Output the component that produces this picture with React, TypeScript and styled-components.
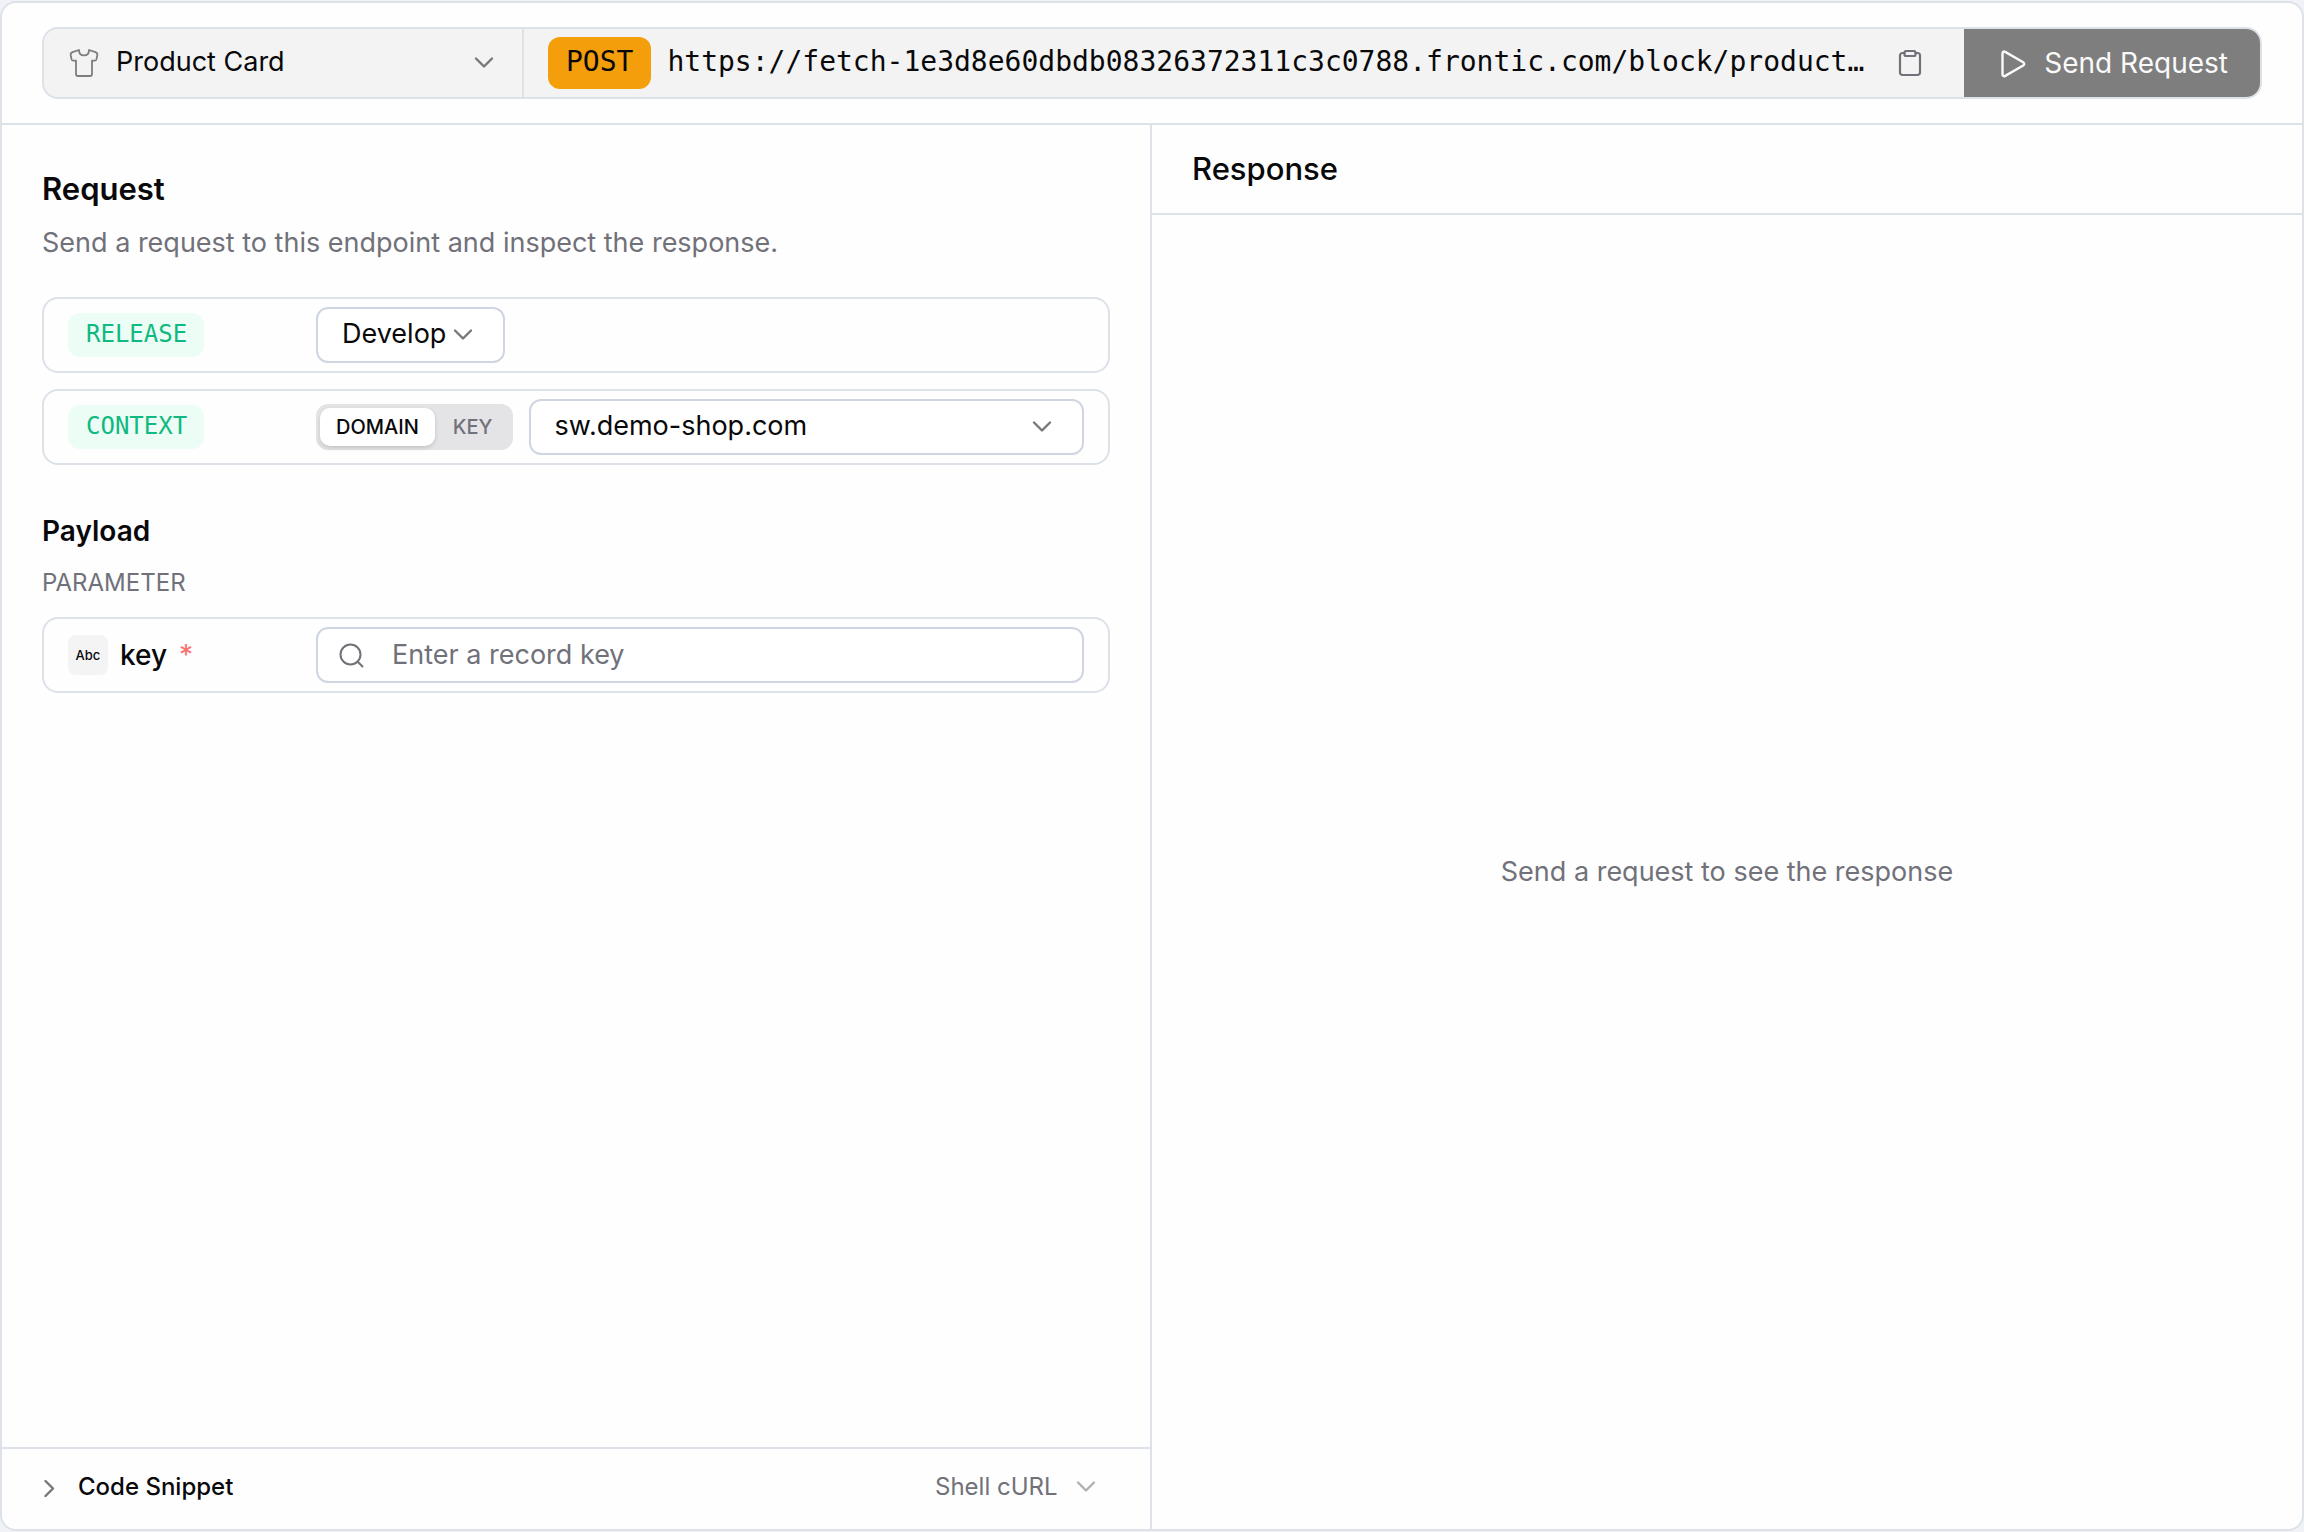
import React, { useState } from "react";
import styled, { createGlobalStyle, css } from "styled-components";

const line = "#dde2e9";
const controlLine = "#cfd6e1";
const ink = "#09090b";
const muted = "#71717a";
const sans = `Inter, "Liberation Sans", sans-serif`;
const mono = `"DejaVu Sans Mono", "Liberation Mono", monospace`;

const GlobalStyle = createGlobalStyle`
  *, *::before, *::after { box-sizing: border-box; }
  body { margin: 0; background: #f0f2f8; color: ${ink}; font-family: ${sans}; font-size: 27px; line-height: 40px; }
  h2, h3, p { margin: 0; }
  button, input, select { font: inherit; color: inherit; margin: 0; }
  svg { display: block; flex: none; }
`;

const Frame = styled.div`
  display: flex;
  flex-direction: column;
  min-height: calc(100vh - 2px);
  margin: 1px 0;
  border: 2px solid ${line};
  border-radius: 16px;
  background: #fefefe;
  overflow: hidden;
`;

const TopBar = styled.header`
  padding: 24px 40px;
  border-bottom: 2px solid ${line};
`;

const RequestLine = styled.form`
  display: flex;
  height: 72px;
  border: 2px solid ${line};
  border-radius: 16px;
  background: #f3f3f3;
  overflow: hidden;
`;

const BlockPicker = styled.div`
  display: grid;
  grid-template-columns: 24px 32px 1fr 20px;
  align-items: center;
  width: 480px;
  padding-right: 28px;
  border-right: 2px solid ${line};
  > * { grid-row: 1; }
  > svg:first-child { grid-column: 2; }
  > svg:last-child { grid-column: 4; pointer-events: none; }
`;

const PlainSelect = styled.select`
  appearance: none;
  grid-column: 1 / -1;
  height: 68px;
  padding: 0 48px 2px 72px;
  border: 0;
  background: none;
  cursor: pointer;
`;

const Address = styled.div`
  display: flex;
  flex: 1;
  align-items: center;
  gap: 16px;
  min-width: 0;
  padding: 0 42px 0 24px;
`;

const Method = styled.span`
  padding: 5px 18px 7px;
  border-radius: 12px;
  background: #f59e0b;
  font: 28px/40px ${mono};
`;

const Url = styled.span`
  flex: 1;
  min-width: 0;
  padding-bottom: 2px;
  overflow: hidden;
  text-overflow: ellipsis;
  white-space: nowrap;
  font: 28px/40px ${mono};
`;

const IconButton = styled.button`
  display: flex;
  margin-left: 16px;
  padding: 0;
  border: 0;
  background: none;
  color: ${muted};
  cursor: pointer;
`;

const SendButton = styled.button`
  display: flex;
  align-items: center;
  gap: 14px;
  padding: 0 32px 0 34px;
  border: 0;
  background: #7e7e7e;
  color: #fafafa;
  font-size: 28px;
  cursor: pointer;
`;

const Panels = styled.main`
  display: grid;
  grid-template-columns: 1fr 1fr;
  flex: 1;
`;

const RequestPanel = styled.section`
  display: flex;
  flex-direction: column;
  min-width: 0;
  border-right: 2px solid ${line};
`;

const RequestBody = styled.div`
  display: flex;
  flex: 1;
  flex-direction: column;
  padding: 42px 40px 40px;
`;

const Title = styled.h2<{ $weight: number }>`
  font-size: 31px;
  line-height: 44px;
  font-weight: ${(p) => p.$weight};
`;

const Note = styled.p`
  color: ${muted};
`;

const Intro = styled(Note)`
  margin: 12px 0 34px;
`;

const Rows = styled.div`
  display: flex;
  flex-direction: column;
  gap: 16px;
`;

const Row = styled.div`
  display: grid;
  grid-template-columns: 248px 1fr;
  align-items: center;
  padding: 8px 24px;
  border: 2px solid ${line};
  border-radius: 16px;
`;

const Fields = styled.div`
  display: flex;
  align-items: center;
  gap: 16px;
`;

const Tag = styled.label`
  justify-self: start;
  padding: 3px 17px 5px 18px;
  border-radius: 12px;
  background: #ecfdf5;
  color: #10b981;
  font: 24px/36px ${mono};
`;

const SelectBox = styled.div<{ $fill?: boolean }>`
  display: grid;
  grid-template-columns: 1fr 20px;
  align-items: center;
  padding-right: 30px;
  border: 2px solid ${controlLine};
  border-radius: 12px;
  background: #fff;
  ${(p) => p.$fill && css`flex: 1;`}
  > svg { grid-area: 1 / 2; pointer-events: none; }
`;

const BoxedSelect = styled.select`
  appearance: none;
  grid-area: 1 / 1 / 2 / 3;
  height: 52px;
  padding: 0 26px 2px 24px;
  border: 0;
  background: none;
  cursor: pointer;
`;

const Segments = styled.div`
  display: flex;
  gap: 2px;
  height: 46px;
  padding: 4px;
  border-radius: 12px;
  background: #e4e4e7;
`;

const Segment = styled.label<{ $on: boolean }>`
  display: flex;
  align-items: center;
  padding: 0 16px;
  border-radius: 10px;
  font-size: 20px;
  font-weight: 500;
  line-height: 28px;
  color: ${muted};
  cursor: pointer;
  ${(p) => p.$on && css`background: #fff; color: ${ink}; box-shadow: 0 2px 4px rgb(0 0 0 / 14%);`}
  input { position: absolute; opacity: 0; pointer-events: none; }
`;

const PayloadHead = styled.div`
  padding: 46px 0 16px;
`;

const Subtitle = styled.h3`
  font-size: 28px;
  font-weight: 600;
`;

const GroupLabel = styled.p`
  margin-top: 14px;
  color: ${muted};
  font-size: 24px;
  line-height: 36px;
`;

const ParamName = styled.label`
  display: flex;
  align-items: center;
  font-size: 28px;
  font-weight: 500;
`;

const TypeTile = styled.span`
  display: grid;
  place-items: center;
  width: 40px;
  height: 40px;
  margin-right: 12px;
  border-radius: 8px;
  background: #f4f4f5;
  font-size: 13px;
  line-height: 20px;
`;

const Required = styled.span`
  margin-left: 12px;
  color: #f87171;
  font-weight: 400;
`;

const SearchBox = styled.div`
  display: flex;
  flex: 1;
  align-items: center;
  gap: 28px;
  height: 56px;
  padding: 0 20px;
  border: 2px solid ${controlLine};
  border-radius: 12px;
  background: #fff;
  color: ${muted};
`;

const SearchInput = styled.input`
  flex: 1;
  min-width: 0;
  height: 50px;
  padding: 0 0 2px;
  border: 0;
  outline: 0;
  background: none;
  color: ${ink};
  &::placeholder { color: ${muted}; opacity: 1; }
`;

const SnippetBar = styled.footer`
  display: flex;
  align-items: center;
  justify-content: space-between;
  height: 82px;
  padding: 0 54px 4px 36px;
  border-top: 2px solid ${line};
  font-size: 24px;
  line-height: 36px;
`;

const SnippetToggle = styled.button`
  display: flex;
  align-items: center;
  gap: 20px;
  padding: 0;
  border: 0;
  background: none;
  font-weight: 500;
  cursor: pointer;
`;

const LanguagePicker = styled.div`
  display: grid;
  grid-template-columns: 1fr 20px;
  align-items: center;
  color: ${muted};
  > svg { grid-area: 1 / 2; pointer-events: none; color: #b0b0b3; }
`;

const LanguageSelect = styled.select`
  appearance: none;
  grid-area: 1 / 1 / 2 / 3;
  padding: 0 38px 0 0;
  border: 0;
  background: none;
  cursor: pointer;
`;

const ResponsePanel = styled.section`
  display: flex;
  flex-direction: column;
  min-width: 0;
`;

const ResponseHead = styled.div`
  padding: 22px 40px;
  border-bottom: 2px solid ${line};
`;

const EmptyState = styled.div`
  display: grid;
  flex: 1;
  place-items: center;
`;

const stroke = {
  fill: "none",
  stroke: "currentColor",
  strokeLinecap: "round",
  strokeLinejoin: "round",
  "aria-hidden": true,
} as const;

const Chevron = ({ color = "#77777b" }: { color?: string }) => (
  <svg width="20" height="20" viewBox="0 0 20 20" strokeWidth="2.4" {...stroke} stroke={color}>
    <path d="M2 5.500 10 13.500 18 5.500" />
  </svg>
);

const ChevronRight = () => (
  <svg width="20" height="20" viewBox="0 0 20 20" strokeWidth="2.4" {...stroke} stroke="#77777b">
    <path d="M7.500 4 15 11.500 7.500 19" />
  </svg>
);

const Shirt = () => (
  <svg width="32" height="32" viewBox="0 0 32 32" strokeWidth="1.8" {...stroke} stroke="#7d7d82">
    <path d="M11 3 4.500 5.200C3.200 5.700 2.500 6.800 2.700 8.200L3.600 12.400c.2.800.8 1.300 1.600 1.300H8V27c0 1.200.8 2 2 2h12c1.200 0 2-.8 2-2V13.700h2.800c.8 0 1.400-.5 1.600-1.300l.9-4.200c.2-1.400-.5-2.500-1.800-3L21 3c0 3.400-2 5.400-5 5.400S11 6.400 11 3z" />
  </svg>
);

const Clipboard = () => (
  <svg width="24" height="28" viewBox="0 0 24 28" strokeWidth="2.2" {...stroke}>
    <path d="M6.500 4H4.500a2.500 2.500 0 0 0-2.500 2.500v17A2.500 2.500 0 0 0 4.500 26h15a2.500 2.500 0 0 0 2.500-2.500v-17A2.500 2.500 0 0 0 19.500 4h-2" />
    <rect x="6.500" y="2" width="11" height="5" rx="1.500" />
  </svg>
);

const Play = () => (
  <svg width="32" height="32" viewBox="0 0 32 32" strokeWidth="2.4" {...stroke}>
    <path d="M4.500 6.500v20.800c0 1.600 1.400 2.400 2.700 1.600l18-10.400c1.300-.8 1.300-2.400 0-3.200l-18-10.400C5.900 4.100 4.500 4.900 4.500 6.500z" />
  </svg>
);

const Search = () => (
  <svg width="26" height="26" viewBox="0 0 26 26" strokeWidth="2" {...stroke}>
    <circle cx="12.500" cy="12.500" r="10" />
    <path d="m19.700 19.700 4.800 4.800" />
  </svg>
);

export default function App() {
  const [scope, setScope] = useState("DOMAIN");
  const [open, setOpen] = useState(false);

  return (
    <>
      <GlobalStyle />
      <Frame>
        <TopBar>
          <RequestLine onSubmit={(e) => e.preventDefault()}>
            <BlockPicker>
              <Shirt />
              <PlainSelect aria-label="Block">
                <option>Product Card</option>
              </PlainSelect>
              <Chevron />
            </BlockPicker>
            <Address>
              <Method>POST</Method>
              <Url>https://fetch-1e3d8e60dbdb08326372311c3c0788.frontic.com/block/product-card</Url>
              <IconButton type="button" aria-label="Copy URL">
                <Clipboard />
              </IconButton>
            </Address>
            <SendButton type="submit">
              <Play />
              Send Request
            </SendButton>
          </RequestLine>
        </TopBar>

        <Panels>
          <RequestPanel>
            <RequestBody>
              <Title $weight={600}>Request</Title>
              <Intro>Send a request to this endpoint and inspect the response.</Intro>

              <Rows>
                <Row>
                  <Tag htmlFor="release">RELEASE</Tag>
                  <Fields>
                    <SelectBox>
                      <BoxedSelect id="release">
                        <option>Develop</option>
                      </BoxedSelect>
                      <Chevron />
                    </SelectBox>
                  </Fields>
                </Row>
                <Row>
                  <Tag htmlFor="context">CONTEXT</Tag>
                  <Fields>
                    <Segments role="radiogroup" aria-label="Context type">
                      {["DOMAIN", "KEY"].map((name) => (
                        <Segment key={name} $on={scope === name}>
                          <input
                            type="radio"
                            name="scope"
                            checked={scope === name}
                            onChange={() => setScope(name)}
                          />
                          {name}
                        </Segment>
                      ))}
                    </Segments>
                    <SelectBox $fill>
                      <BoxedSelect id="context">
                        <option>sw.demo-shop.com</option>
                      </BoxedSelect>
                      <Chevron />
                    </SelectBox>
                  </Fields>
                </Row>
              </Rows>

              <PayloadHead>
                <Subtitle>Payload</Subtitle>
                <GroupLabel>PARAMETER</GroupLabel>
              </PayloadHead>

              <Row>
                <ParamName htmlFor="record-key">
                  <TypeTile>Abc</TypeTile>
                  key
                  <Required>*</Required>
                </ParamName>
                <SearchBox>
                  <Search />
                  <SearchInput id="record-key" type="text" placeholder="Enter a record key" />
                </SearchBox>
              </Row>
            </RequestBody>

            <SnippetBar>
              <SnippetToggle type="button" aria-expanded={open} onClick={() => setOpen(!open)}>
                <ChevronRight />
                Code Snippet
              </SnippetToggle>
              <LanguagePicker>
                <LanguageSelect aria-label="Snippet language">
                  <option>Shell cURL</option>
                </LanguageSelect>
                <Chevron color="currentColor" />
              </LanguagePicker>
            </SnippetBar>
          </RequestPanel>

          <ResponsePanel>
            <ResponseHead>
              <Title $weight={500}>Response</Title>
            </ResponseHead>
            <EmptyState>
              <Note>Send a request to see the response</Note>
            </EmptyState>
          </ResponsePanel>
        </Panels>
      </Frame>
    </>
  );
}
